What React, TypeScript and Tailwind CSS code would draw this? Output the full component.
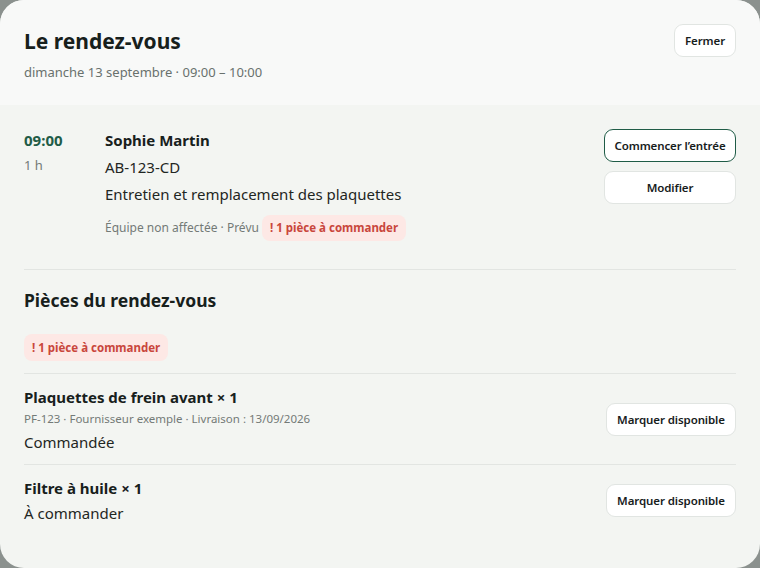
import React from 'react';

const font = { fontFamily: '"Noto Sans", "Open Sans", sans-serif' };

function Btn({ children, primary, className = '' }: { children: React.ReactNode; primary?: boolean; className?: string }) {
  return (
    <button
      className={`h-[33px] whitespace-nowrap rounded-[9px] bg-white px-[6px] text-[11.5px] font-semibold tracking-[-0.1px] text-[#17201c] ${primary ? 'border border-[#1f5c47]' : 'border border-[#e1e5e2]'} ${className}`}
    >
      {children}
    </button>
  );
}

function Badge({ className = '' }: { className?: string }) {
  return (
    <span className={`inline-flex items-center rounded-[8px] bg-[#fde8e5] px-2 text-[11.5px] font-bold text-[#c9463c] ${className}`}>
      ! 1 pièce à commander
    </span>
  );
}

export default function App() {
  const parts = [
    { name: 'Plaquettes de frein avant × 1', meta: 'PF-123 · Fournisseur exemple · Livraison : 13/09/2026', status: 'Commandée' },
    { name: 'Filtre à huile × 1', meta: null, status: 'À commander' },
  ];

  return (
    <div className="h-[568px] w-[760px] overflow-hidden bg-[#8b918e]" style={font}>
      <div className="flex h-full flex-col overflow-hidden rounded-[24px] bg-[#f3f5f2]">
        <div className="flex h-[105px] items-start justify-between bg-[#f8f9f8] px-6 pt-6">
          <div>
            <h1 className="pt-[2px] text-[21px] font-bold leading-[30px] text-[#17201c]">Le rendez-vous</h1>
            <p className="mt-[7px] text-[13px] leading-[18px] text-[#69716d]">dimanche 13 septembre · 09:00 – 10:00</p>
          </div>
          <Btn className="w-[62px]">Fermer</Btn>
        </div>

        <div className="px-6 pt-6">
          <div className="flex items-start border-b border-[#e2e5e2] pb-[28px]">
            <div className="w-[81px]">
              <div className="text-[15px] font-bold leading-[22px] text-[#1f5c47]">09:00</div>
              <div className="mt-[5px] text-[13px] leading-[18px] text-[#737a77]">1 h</div>
            </div>
            <div className="flex flex-1 flex-col gap-[5px]">
              <div className="text-[15px] font-bold leading-[22px] text-[#17201c]">Sophie Martin</div>
              <div className="text-[15px] leading-[22px] text-[#1f2623]">AB-123-CD</div>
              <div className="text-[15px] leading-[22px] text-[#1f2623]">Entretien et remplacement des plaquettes</div>
              <div className="mt-[5px] flex items-center text-[12px] text-[#737a77]">
                <span>Équipe non affectée · Prévu</span>
                <Badge className="ml-[3px] h-[26px]" />
              </div>
            </div>
            <div className="flex w-[132px] flex-col gap-[9px]">
              <Btn primary>Commencer l’entrée</Btn>
              <Btn>Modifier</Btn>
            </div>
          </div>

          <h2 className="pt-[17px] text-[17.5px] font-bold leading-[26px] text-[#17201c]">Pièces du rendez-vous</h2>
          <div className="mt-[21px] border-b border-[#e2e5e2] pb-[12px]">
            <Badge className="h-[27px]" />
          </div>

          {parts.map((p, i) => (
            <div
              key={p.name}
              className={`flex items-center justify-between pt-3 ${i < parts.length - 1 ? 'border-b border-[#e2e5e2] pb-[11px]' : 'pb-3'}`}
            >
              <div>
                <div className="text-[15px] font-bold leading-[22px] text-[#17201c]">{p.name}</div>
                {p.meta && <div className="mt-[2px] text-[11.5px] leading-[18px] text-[#737a77]">{p.meta}</div>}
                <div className="mt-[3px] text-[15px] leading-[22px] text-[#1f2623]">{p.status}</div>
              </div>
              <Btn className="w-[130px]">Marquer disponible</Btn>
            </div>
          ))}
        </div>
      </div>
    </div>
  );
}
